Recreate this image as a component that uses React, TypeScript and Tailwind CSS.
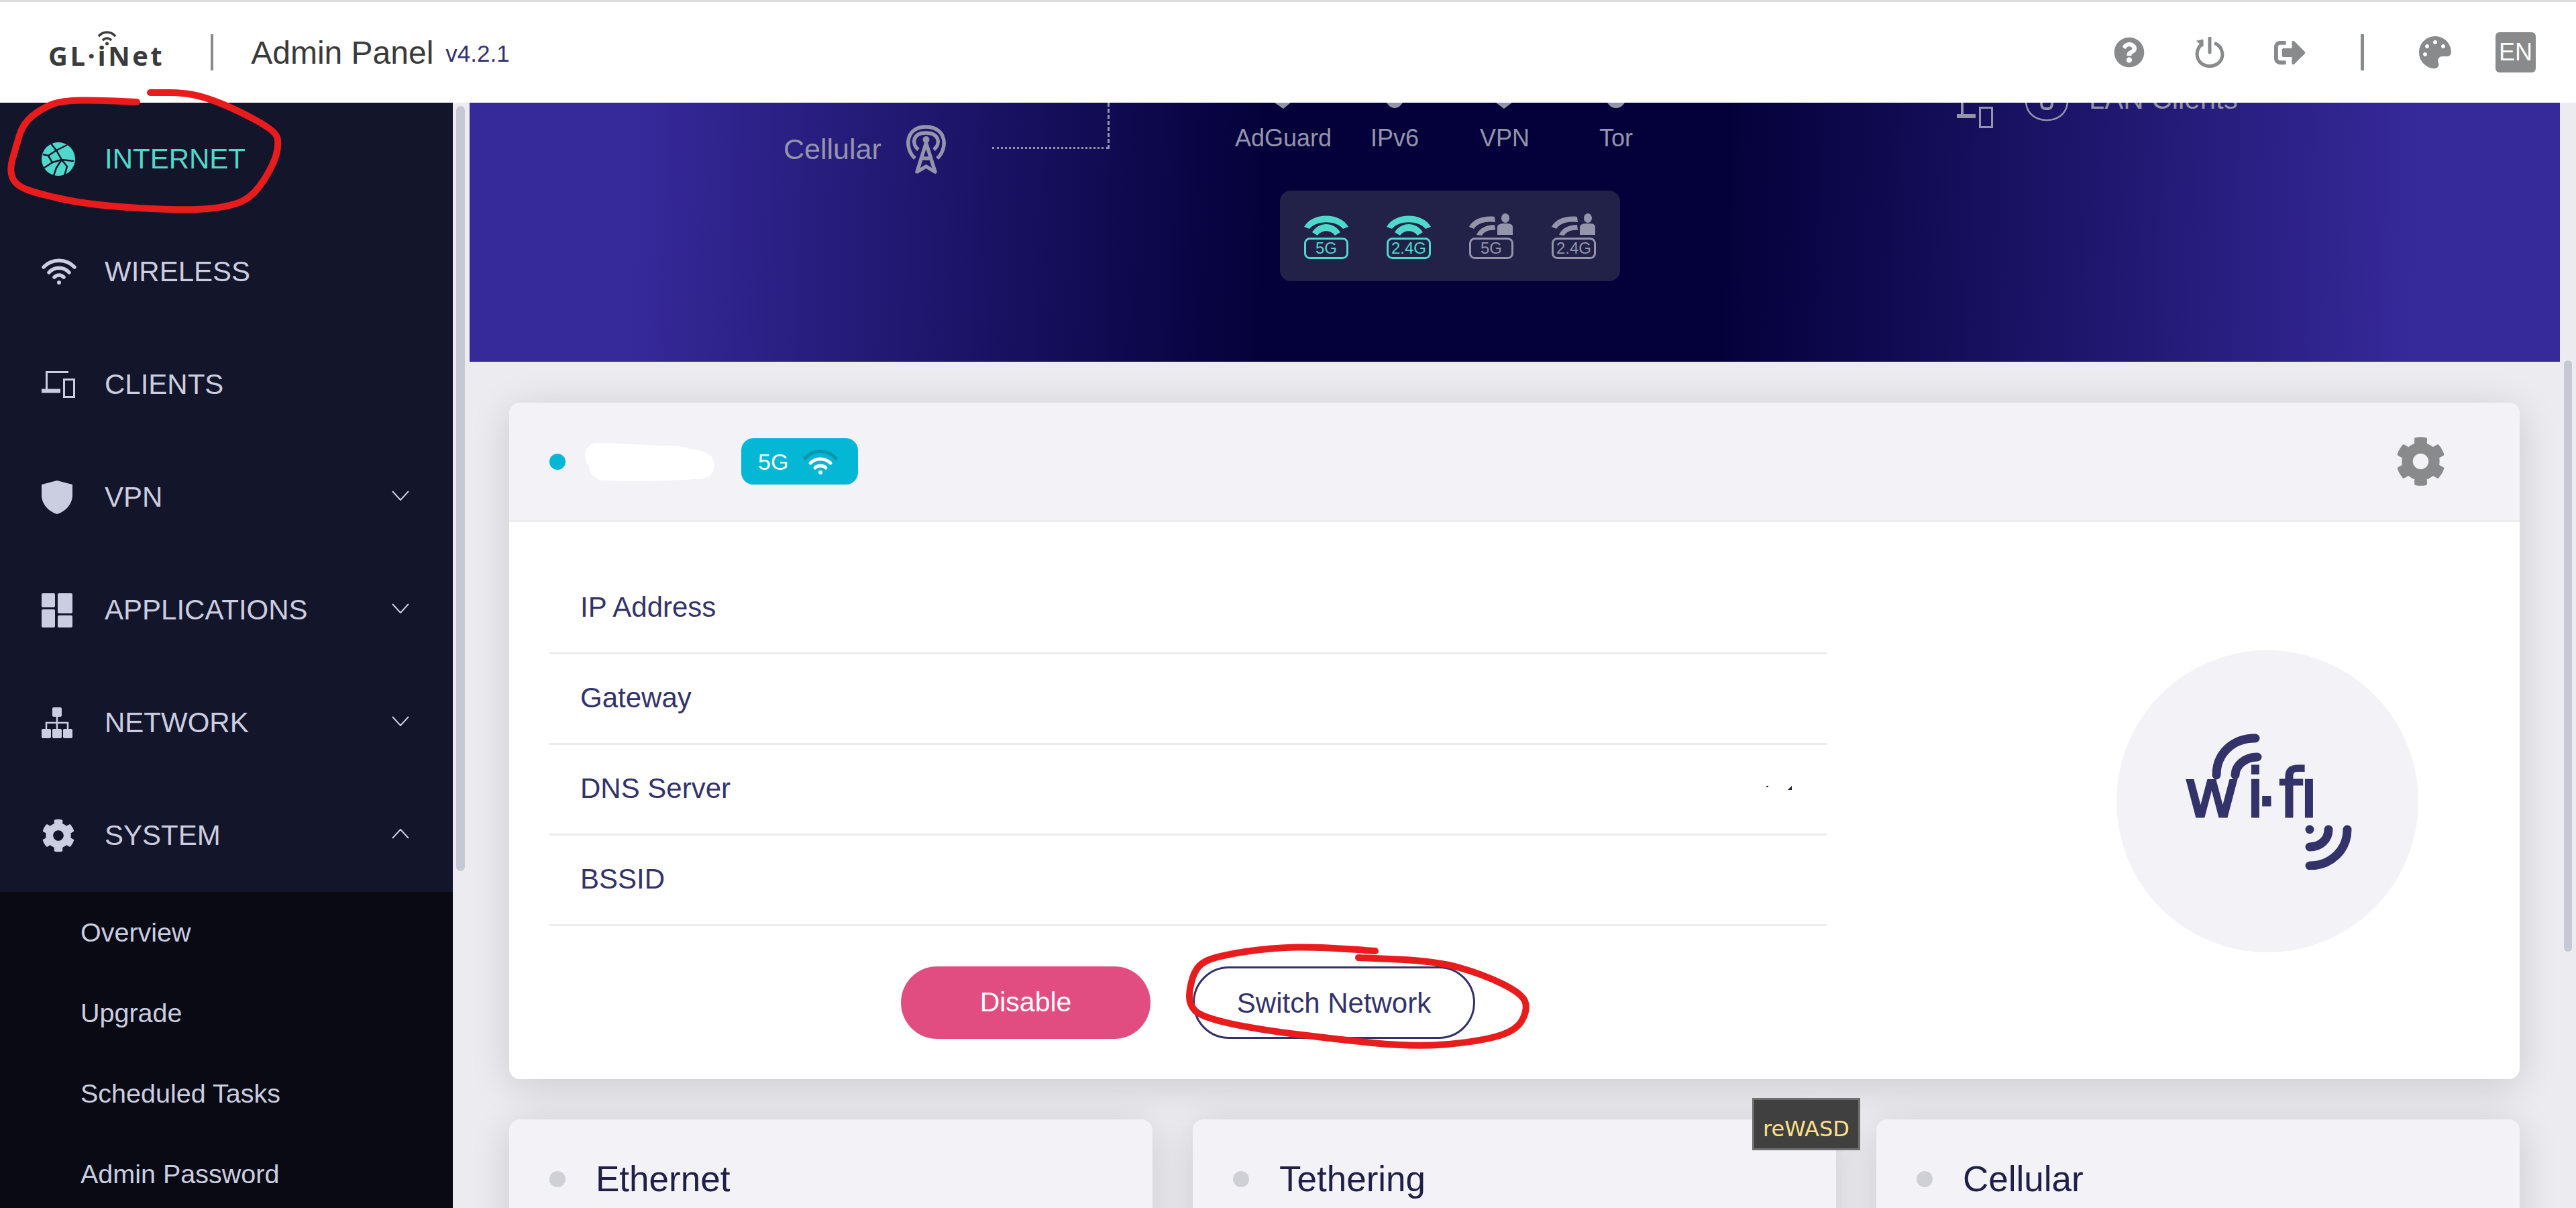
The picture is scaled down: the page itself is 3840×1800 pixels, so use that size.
import { FaCog, FaPalette, FaQuestionCircle, FaSignOutAlt } from 'react-icons/fa';

const SIDEBAR_TEXT = '#cbcde0';

function smooth(points: number[][]) {
  let d = `M${points[0][0]} ${points[0][1]}`;
  for (let i = 1; i < points.length - 1; i++) {
    const [x, y] = points[i];
    const [nx, ny] = points[i + 1];
    d += ` Q${x} ${y} ${(x + nx) / 2} ${(y + ny) / 2}`;
  }
  const last = points[points.length - 1];
  return d + ` L${last[0]} ${last[1]}`;
}

const internetCircle = [
  [204, 152], [150, 149], [92, 150], [63, 161], [34, 184], [23, 222], [14, 253], [23, 276], [57, 289],
  [138, 306], [276, 314], [344, 308], [379, 291], [408, 245], [416, 214], [410, 195], [356, 165],
  [304, 144], [270, 138], [224, 138],
];

const switchCircle = [
  [2050, 1417], [1973, 1411], [1896, 1412], [1811, 1425], [1783, 1440], [1773, 1473], [1773, 1497], [1790, 1515],
  [1868, 1533], [1987, 1548], [2106, 1560], [2197, 1553], [2260, 1537], [2278, 1503], [2268, 1480],
  [2211, 1452], [2141, 1432], [2025, 1427],
];

function GlobeIcon() {
  return (
    <svg width="50" height="50" viewBox="0 0 50 50">
      <circle cx="25" cy="25" r="25" fill="#4fd9cb" />
      <g fill="none" stroke="#13152a" strokeWidth="2.5">
        <path d="M14 2 L22 12 L38 4" />
        <path d="M22 12 L10 20 L2 18" />
        <path d="M10 20 L16 30 L4 38" />
        <path d="M22 12 L30 26 L48 28" />
        <path d="M30 26 L16 30" />
        <path d="M30 26 L22 38 L18 50" />
        <path d="M30 26 L38 36 L34 50" />
      </g>
    </svg>
  );
}

function WifiIcon() {
  return (
    <svg width="52" height="40" viewBox="0 0 52 40" fill="none" stroke="currentColor" strokeWidth="5.5" strokeLinecap="round">
      <path d="M3 13 C15 0 37 0 49 13" />
      <path d="M11 21 C19 12 33 12 41 21" />
      <path d="M19 28 C23 24 29 24 33 28" />
      <circle cx="26" cy="36" r="3" fill="currentColor" stroke="none" />
    </svg>
  );
}

function ClientsIcon() {
  return (
    <svg width="50" height="40" viewBox="0 0 50 40" fill="none" stroke="currentColor">
      <path d="M40 1.5 H7.5 V28" strokeWidth="3" />
      <path d="M0 29.5 H28" strokeWidth="6" />
      <rect x="33.5" y="12.5" width="15" height="26" strokeWidth="3" />
    </svg>
  );
}

function ShieldIcon() {
  return (
    <svg width="46" height="50" viewBox="0 0 46 50" fill="currentColor">
      <path d="M23 0 L46 6 V22 C46 36 34 47 23 50 C12 47 0 36 0 22 V6 Z" />
    </svg>
  );
}

function AppsIcon() {
  return (
    <svg width="46" height="51" viewBox="0 0 46 51" fill="currentColor">
      <rect x="0" y="0" width="20" height="21" rx="2" />
      <rect x="24" y="0" width="22" height="30" rx="2" />
      <rect x="0" y="24" width="20" height="27" rx="2" />
      <rect x="24" y="33" width="22" height="18" rx="2" />
    </svg>
  );
}

function NetworkIcon() {
  return (
    <svg width="46" height="46" viewBox="0 0 46 46" fill="currentColor">
      <rect x="16" y="0" width="14" height="14" rx="2" />
      <rect x="0" y="32" width="14" height="14" rx="2" />
      <rect x="16" y="32" width="14" height="14" rx="2" />
      <rect x="32" y="32" width="14" height="14" rx="2" />
      <path d="M23 14 V32 M7 32 V23 H39 V32" fill="none" stroke="currentColor" strokeWidth="2.5" />
    </svg>
  );
}

function Chevron({ up }: { up?: boolean }) {
  return (
    <svg className="mb-[5px]" width="26" height="15" viewBox="0 0 26 15" fill="none" stroke="currentColor" strokeWidth="2">
      <path d={up ? 'M1 14 L13 1 L25 14' : 'M1 1 L13 14 L25 1'} />
    </svg>
  );
}

function PowerIcon() {
  return (
    <svg width="44" height="46" viewBox="0 0 44 46" fill="none" stroke="#888a8c" strokeWidth="5" strokeLinecap="round">
      <path d="M31 10 C42 16 44 30 36 38 C28 46 14 45 7 37 C1 29 2 18 10 11" />
      <path d="M22 2 V23" />
      <path d="M3 6 L12 4 L12 14 Z" fill="#888a8c" strokeWidth="1" />
    </svg>
  );
}

function BandIcon({ label, active, guest }: { label: string; active?: boolean; guest?: boolean }) {
  const color = active ? '#4fd9cb' : '#9495ab';
  return (
    <svg width="66" height="68" viewBox="0 0 66 68" fill={color}>
      {guest ? (
        <>
          <path d="M0 20 C6 8 22 3 38 5 L39 13 C24 11 12 15 7 23 Z" />
          <path d="M11 32 C15 22 26 17 38 17 L39 25 C30 24 22 27 19 33 Z" />
          <ellipse cx="54" cy="7" rx="6" ry="7" />
          <path d="M42 32 V21 C42 16 46 15 54 15 C62 15 65 16 65 21 V32 Z" />
        </>
      ) : (
        <>
          <path d="M0 20 C12 -2 54 -2 66 20 L58 23 C48 10 18 10 8 23 Z" />
          <path d="M12 28 C22 12 44 12 54 28 L46 33 C40 24 26 24 20 33 Z" />
        </>
      )}
      <rect x="1.5" y="37.5" width="63" height="29" rx="7" fill="none" stroke={color} strokeWidth="3" />
      <text x="33" y="60" textAnchor="middle" fontSize="24" fontFamily="Liberation Sans, sans-serif">
        {label}
      </text>
    </svg>
  );
}

function AntennaIcon() {
  return (
    <svg width="61" height="75" viewBox="0 0 61 75" fill="none" stroke="#9495ab" strokeWidth="5.5">
      <path d="M14 50 C-2 36 -1 3 30 3 C62 3 63 36 47 50" />
      <path d="M19 37 C8 28 11 12 30 12 C50 12 53 28 42 37" />
      <path d="M30.5 27 L17 70 L30.5 62 L44 70 Z" strokeLinejoin="round" />
      <path d="M23 50 H38" />
      <circle cx="30.5" cy="22" r="5" fill="#9495ab" stroke="none" />
    </svg>
  );
}

function WifiLogo() {
  return (
    <svg width="250" height="203" viewBox="0 0 250 203" fill="none" stroke="#33336a" strokeWidth="13" strokeLinecap="round">
      <path d="M48 62 C48 30 72 7 106 7" />
      <path d="M76 62 C76 48 90 35 109 35" />
      <text
        x="0 92 107 141 172"
        y="124"
        dy="0 0 12 -12 0"
        fill="#33336a"
        stroke="#33336a"
        strokeWidth="3"
        strokeLinecap="butt"
        fontSize="100"
        fontFamily="DejaVu Sans, sans-serif"
      >
        wi·fı
      </text>
      <circle cx="187" cy="143" r="6.5" fill="#33336a" stroke="none" />
      <path d="M215 143 C215 158 203 169 187 169" />
      <path d="M243 143 C243 174 218 197 187 197" />
    </svg>
  );
}

const navItems = [
  { name: 'INTERNET', icon: <GlobeIcon />, active: true },
  { name: 'WIRELESS', icon: <WifiIcon /> },
  { name: 'CLIENTS', icon: <ClientsIcon /> },
  { name: 'VPN', icon: <ShieldIcon />, arrow: 'down' },
  { name: 'APPLICATIONS', icon: <AppsIcon />, arrow: 'down' },
  { name: 'NETWORK', icon: <NetworkIcon />, arrow: 'down' },
  { name: 'SYSTEM', icon: <FaCog size={50} />, arrow: 'up' },
];

const subItems = ['Overview', 'Upgrade', 'Scheduled Tasks', 'Admin Password'];
const infoRows = ['IP Address', 'Gateway', 'DNS Server', 'BSSID'];
const lowerCards = ['Ethernet', 'Tethering', 'Cellular'];

const serviceLabels = [
  { name: 'AdGuard', x: 1213 },
  { name: 'IPv6', x: 1379 },
  { name: 'VPN', x: 1543 },
  { name: 'Tor', x: 1709 },
];

function Sidebar() {
  return (
    <aside className="flex w-[700px] shrink-0">
      <nav className="w-[675px] bg-[#13152a] text-[42px]" style={{ color: SIDEBAR_TEXT }}>
        {navItems.map((item) => (
          <div
            key={item.name}
            className={`flex h-[168px] items-center pl-[62px] pr-[65px] ${item.active ? 'text-[#4fd9cb]' : ''}`}
          >
            <div className="flex w-[94px] shrink-0 items-center justify-start">{item.icon}</div>
            <span className="flex-1 leading-none">{item.name}</span>
            {item.arrow && <Chevron up={item.arrow === 'up'} />}
          </div>
        ))}
        <div className="bg-[#090a14] text-[39.5px]">
          {subItems.map((name) => (
            <div key={name} className="flex h-[120px] items-center pl-[120px] pt-[2px]">
              {name}
            </div>
          ))}
        </div>
      </nav>
      <div className="w-[25px] bg-[#ebebf0] px-[5px] pt-[5px]">
        <div className="h-[1140px] w-[13px] rounded-full bg-[#c6c8d6]" />
      </div>
    </aside>
  );
}

function Banner() {
  return (
    <section className="relative h-[386px] overflow-hidden bg-[linear-gradient(92deg,#36299a_0%,#36299a_8%,#04013a_38%,#04013a_60%,#36299a_93%)] text-[36px] text-[#9495ab]">
      {/* diagram nodes, the top part is scrolled away under the header */}
      <span className="absolute left-[468px] top-[48px] text-[43px] leading-none">Cellular</span>
      <div className="absolute left-[650px] top-[33px]">
        <AntennaIcon />
      </div>
      <div className="absolute left-[779px] top-[66px] h-[3px] w-[173px] border-t-[3px] border-dotted border-[#9495ab]" />
      <div className="absolute left-[951px] top-0 h-[69px] w-[3px] border-l-[3px] border-dashed border-[#9495ab]" />

      {serviceLabels.map((label) => (
        <span key={label.name} className="absolute top-[35px] -translate-x-1/2 leading-none" style={{ left: label.x }}>
          {label.name}
        </span>
      ))}
      <svg className="absolute left-[1190px] top-0" width="540" height="10" viewBox="0 0 540 10" fill="#9495ab">
        <path d="M10 0 H34 L23 9 Z" />
        <path d="M177 0 H201 C197 6 193 8 189 8 C185 8 181 6 177 0 Z" />
        <path d="M340 0 H364 L352 9 Z" />
        <path d="M506 0 H532 C528 6 524 8 519 8 C514 8 510 6 506 0 Z" />
      </svg>

      <div className="absolute left-[1208px] top-[131px] flex h-[135px] w-[507px] items-center justify-center gap-[57px] rounded-[16px] bg-[#222148]">
        <BandIcon label="5G" active />
        <BandIcon label="2.4G" active />
        <BandIcon label="5G" guest />
        <BandIcon label="2.4G" guest />
      </div>

      <svg className="absolute left-[2217px] top-0" width="56" height="38" viewBox="0 0 56 38" fill="none" stroke="#9495ab">
        <path d="M8 0 V20" strokeWidth="4" />
        <path d="M0 20 H28" strokeWidth="6" />
        <rect x="34.5" y="7.5" width="18" height="29" strokeWidth="3" />
      </svg>
      <svg className="absolute left-[2318px] top-0" width="66" height="28" viewBox="0 0 66 28" fill="none" stroke="#9495ab">
        <path d="M2 0 C4 18 18 26 33 26 C48 26 62 18 64 0" strokeWidth="2.5" />
        <path d="M25 0 C25 8 28 9 33 9 C38 9 41 8 41 0" strokeWidth="4" />
      </svg>
      <span className="absolute left-[2414px] top-[-26px] text-[42px] leading-none">LAN Clients</span>
    </section>
  );
}

function NetworkCard() {
  return (
    <div className="overflow-hidden rounded-[16px] bg-white shadow-[0_10px_60px_rgba(0,0,0,0.14)]">
      <div className="flex h-[178px] items-center border-b-[3px] border-[#ebebf0] bg-[#f2f2f7] pl-[60px] pr-[110px]">
        <div className="h-[24px] w-[24px] rounded-full bg-[#04b7d4]" />
        <svg className="ml-[29px]" width="193" height="60" viewBox="0 0 193 60" fill="#ffffff">
          <path d="M18 2 C60 2 90 6 130 6 C145 6 150 10 165 12 C185 14 193 24 193 36 C193 50 180 56 165 56 C130 58 90 60 28 58 C14 57 6 46 6 36 C0 30 0 22 0 20 C0 10 8 2 18 2 Z" />
        </svg>
        <div className="ml-[40px] flex h-[69px] w-[174px] items-center rounded-[18px] bg-[#04b7d4] pl-[25px] text-[34px] leading-none text-white">
          <span>5G</span>
          <svg className="ml-[23px]" width="50" height="38" viewBox="0 0 50 38" fill="none" strokeWidth="5" strokeLinecap="round">
            <path d="M2 14 C14 0 36 0 48 14" stroke="#0a96ad" />
            <path d="M10 21 C18 13 32 13 40 21" stroke="#ffffff" />
            <path d="M17 28 C21 24 29 24 33 28" stroke="#ffffff" />
            <circle cx="25" cy="35" r="3" fill="#ffffff" />
          </svg>
        </div>
        <FaCog size={75} className="ml-auto text-[#888a8c]" />
      </div>
      <div className="flex items-center justify-between pl-[60px] pr-[151px] pt-[62px] pb-[60px]">
        <div className="w-[1904px] text-[42px] text-[#33336a]">
          {infoRows.map((row) => (
            <div key={row} className="flex h-[135px] items-center justify-between border-b-[3px] border-[#ebebf0] pb-[3px] pl-[46px] pr-[52px]">
              <span>{row}</span>
              {row === 'DNS Server' && (
                <svg width="38" height="8" viewBox="0 0 38 8" fill="#1f1f47">
                  <rect x="0" y="0" width="3" height="2" />
                  <path d="M32 6 L38 0 V6 Z" />
                </svg>
              )}
            </div>
          ))}
          <div className="mt-[60px] flex justify-center gap-[63px]">
            <button className="h-[108px] w-[372px] rounded-full bg-[#e14d80] text-[41px] text-white">Disable</button>
            <button className="h-[108px] w-[421px] rounded-full border-[3px] border-[#33336a] bg-white">Switch Network</button>
          </div>
        </div>
        <div className="flex h-[450px] w-[450px] items-center justify-center rounded-full bg-[#f2f2f7] pl-[2px]">
          <WifiLogo />
        </div>
      </div>
    </div>
  );
}

export default function App() {
  return (
    <div className="relative flex h-[1800px] w-[3840px] flex-col overflow-hidden bg-[#ebebf0] font-['Liberation_Sans',Arial,sans-serif]">
      <header className="z-10 flex h-[153px] shrink-0 items-center border-t-[3px] border-[#dcdcdc] bg-white pl-[72px] pr-[60px]">
        <div className="relative mt-[10px] font-['Open_Sans',sans-serif] text-[40px] font-bold leading-none tracking-[3.5px] text-[#3b3b3b]">
          GL·iNet
          <svg className="absolute left-[74px] top-[-17px]" width="27" height="22" viewBox="0 0 27 22" fill="none" stroke="#3b3b3b" strokeWidth="3.5">
            <path d="M1 8 C8 0 19 0 26 8" />
            <path d="M7 14 C11 10 16 10 20 14" />
            <circle cx="13.5" cy="19" r="2.5" fill="#3b3b3b" stroke="none" />
          </svg>
        </div>
        <div className="ml-[69px] h-[54px] w-[4px] bg-[#888a8c]" />
        <span className="ml-[56px] mt-[2px] text-[48px] leading-none text-[#3a3a3a]">Admin Panel</span>
        <span className="ml-[18px] mt-[2px] text-[35px] leading-none text-[#33336a]">v4.2.1</span>

        <div className="ml-auto flex items-center text-[#888a8c]">
          <FaQuestionCircle size={46} />
          <div className="ml-[75px]">
            <PowerIcon />
          </div>
          <FaSignOutAlt size={47} className="ml-[74px]" />
          <div className="ml-[82px] h-[54px] w-[5px] bg-[#888a8c]" />
          <FaPalette size={48} className="ml-[82px]" />
          <div className="ml-[66px] flex h-[60px] w-[60px] items-center justify-center rounded-[6px] bg-[#888a8c] text-[36px] leading-none text-white">
            EN
          </div>
        </div>
      </header>

      <div className="flex min-h-0 flex-1">
        <Sidebar />
        <main className="min-w-0 flex-1">
          <Banner />
          <div className="px-[60px] pl-[59px] pt-[61px]">
            <NetworkCard />
            <div className="mt-[60px] grid grid-cols-3 gap-[60px]">
              {lowerCards.map((name) => (
                <div key={name} className="flex h-[200px] items-start gap-[45px] rounded-[16px] bg-[#f2f2f7] pl-[60px] pt-[60px] shadow-[0_10px_60px_rgba(0,0,0,0.14)]">
                  <div className="mt-[17px] h-[24px] w-[24px] rounded-full bg-[#cfcfd6]" />
                  <span className="text-[53px] leading-[58px] text-[#1f1f47]">{name}</span>
                </div>
              ))}
            </div>
          </div>
        </main>
        <div className="w-[24px] shrink-0 px-[6px] pt-[384px]">
          <div className="h-[881px] w-[12px] rounded-full bg-[#c6c8d6]" />
        </div>
      </div>

      {/* tooltip from another app, sits over the page */}
      <div className="absolute left-[2612px] top-[1636px] z-20 flex h-[78px] w-[161px] items-end justify-center border-[3px] border-[#6f6f6f] bg-[#404040] pb-[13px] font-['DejaVu_Sans',sans-serif] text-[32px] leading-none text-[#fde08a]">
        reWASD
      </div>

      {/* red marker annotations */}
      <svg className="pointer-events-none absolute left-0 top-0 z-30" width="3840" height="1800" fill="none" stroke="#e81c1c" strokeWidth="10" strokeLinecap="round">
        <path d={smooth(internetCircle)} />
        <path d={smooth(switchCircle)} />
      </svg>
    </div>
  );
}
